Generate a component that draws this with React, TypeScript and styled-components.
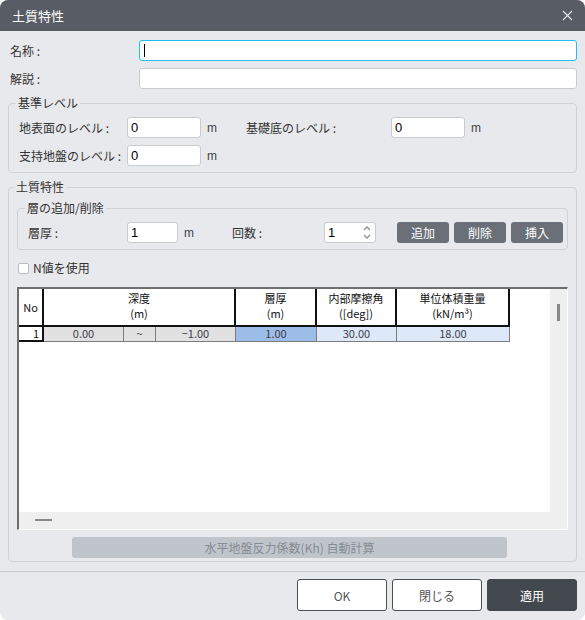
import React from 'react';
import styled, { createGlobalStyle } from 'styled-components';

const GlobalStyle = createGlobalStyle`
  html, body {
    margin: 0;
    padding: 0;
    background: #ffffff;
  }
  body {
    font-family: "Noto Sans CJK JP", "Noto Sans", sans-serif;
    font-size: 12px;
    color: #333;
  }
  * {
    box-sizing: border-box;
  }
`;

const columns = [
  { key: 'no', label: ['No'], span: 1 },
  { key: 'depth', label: ['深度', '(m)'], span: 3 },
  { key: 'thick', label: ['層厚', '(m)'], span: 1 },
  { key: 'phi', label: ['内部摩擦角', '([deg])'], span: 1 },
  { key: 'gamma', label: ['単位体積重量', '(kN/m³)'], span: 1 },
];

const App = () => {
  return (
    <>
      <GlobalStyle />
      <Dialog>
        <TitleBar>
          <span>土質特性</span>
          <CloseIcon width="11" height="11" viewBox="0 0 11 11">
            <path d="M1 1 L10 10 M10 1 L1 10" stroke="#e8e9ec" strokeWidth="1.1" />
          </CloseIcon>
        </TitleBar>

        <Body>
          <FieldRow>
            <FieldLabel>名称 :</FieldLabel>
            <TextBox $focused>
              <Caret />
            </TextBox>
          </FieldRow>
          <FieldRow>
            <FieldLabel>解説 :</FieldLabel>
            <TextBox />
          </FieldRow>

          <Group>
            <Legend>基準レベル</Legend>
            <Rows>
              <Row>
                <RowLabel $w={108}>地表面のレベル :</RowLabel>
                <NumBox $w={74}>0</NumBox>
                <Unit $w={45}>m</Unit>
                <RowLabel $w={145}>基礎底のレベル :</RowLabel>
                <NumBox $w={74}>0</NumBox>
                <Unit $w={30}>m</Unit>
              </Row>
              <Row>
                <RowLabel $w={108}>支持地盤のレベル :</RowLabel>
                <NumBox $w={74}>0</NumBox>
                <Unit $w={30}>m</Unit>
              </Row>
            </Rows>
          </Group>

          <SoilGroup>
            <Legend>土質特性</Legend>
            <SubGroup>
              <Legend>層の追加/削除</Legend>
              <Row>
                <RowLabel $w={99}>層厚 :</RowLabel>
                <NumBox $w={51}>1</NumBox>
                <Unit $w={54}>m</Unit>
                <RowLabel $w={92}>回数 :</RowLabel>
                <SpinBox>
                  <span>1</span>
                  <SpinArrows>
                    <svg width="8" height="5" viewBox="0 0 8 5">
                      <path d="M1 4 L4 1 L7 4" stroke="#8a8f96" strokeWidth="1.3" fill="none" />
                    </svg>
                    <svg width="8" height="5" viewBox="0 0 8 5">
                      <path d="M1 1 L4 4 L7 1" stroke="#8a8f96" strokeWidth="1.3" fill="none" />
                    </svg>
                  </SpinArrows>
                </SpinBox>
                <ActionButtons>
                  <ActionButton>追加</ActionButton>
                  <ActionButton>削除</ActionButton>
                  <ActionButton>挿入</ActionButton>
                </ActionButtons>
              </Row>
            </SubGroup>

            <CheckRow>
              <CheckBox />
              <span>N値を使用</span>
            </CheckRow>

            <TableFrame>
              <TableMain>
                <GridArea>
                  <Grid>
                    {columns.map((c) => (
                      <HeadCell key={c.key} $span={c.span} $single={c.label.length === 1}>
                        {c.label.map((l) => (
                          <HeadLine key={l}>{l}</HeadLine>
                        ))}
                      </HeadCell>
                    ))}
                    <NoCell>1</NoCell>
                    <DataCell $bg="#e1e1e1">0.00</DataCell>
                    <DataCell $bg="#e1e1e1">~</DataCell>
                    <DataCell $bg="#e1e1e1">−1.00</DataCell>
                    <DataCell $bg="#9dbde9">1.00</DataCell>
                    <DataCell $bg="#dde8f8">30.00</DataCell>
                    <DataCell $bg="#dde8f8">18.00</DataCell>
                  </Grid>
                </GridArea>
                <VScroll>
                  <VThumb />
                </VScroll>
              </TableMain>
              <HScroll>
                <HThumb />
              </HScroll>
            </TableFrame>

            <WideButton>水平地盤反力係数(Kh) 自動計算</WideButton>
          </SoilGroup>
        </Body>

        <Separator />
        <Footer>
          <FooterButton>OK</FooterButton>
          <FooterButton>閉じる</FooterButton>
          <FooterButton $primary>適用</FooterButton>
        </Footer>
      </Dialog>
    </>
  );
};

const Dialog = styled.div`
  width: 585px;
  height: 620px;
  background: #e8e9ec;
  border-radius: 8px;
  overflow: hidden;
  display: flex;
  flex-direction: column;
`;

const TitleBar = styled.div`
  height: 31px;
  flex-shrink: 0;
  display: flex;
  align-items: center;
  justify-content: space-between;
  padding: 0 12px 0 12px;
  background: #575c65;
  color: #ffffff;
  font-size: 13px;
  line-height: 16px;
`;

const CloseIcon = styled.svg`
  display: block;
`;

const Body = styled.div`
  padding: 9px 8px 0 8px;
  display: flex;
  flex-direction: column;
`;

const FieldRow = styled.div`
  display: grid;
  grid-template-columns: 131px 1fr;
  align-items: center;
  margin-bottom: 7px;
`;

const FieldLabel = styled.span`
  padding-left: 2px;
  line-height: 16px;
  color: #333;
`;

const TextBox = styled.div<{ $focused?: boolean }>`
  height: 21px;
  display: flex;
  align-items: center;
  padding-left: 4px;
  background: #ffffff;
  border: 1px solid ${(p) => (p.$focused ? '#1fbff0' : '#c8cbd0')};
  border-radius: 3px;
`;

const Caret = styled.span`
  width: 1px;
  height: 13px;
  background: #000;
`;

const Group = styled.fieldset`
  margin: -1px 0 0 0;
  padding: 6px 10px 6px 10px;
  border: 1px solid #cfd2d6;
  border-radius: 4px;
  min-width: 0;
`;

const SoilGroup = styled(Group)`
  margin-top: 6px;
  padding: 5px 8px 3px 8px;
  display: flex;
  flex-direction: column;
`;

const SubGroup = styled(Group)`
  margin: 0;
  padding: 6px 7px 6px 10px;
`;

const Legend = styled.legend`
  margin-left: -3px;
  padding: 0 2px;
  line-height: 16px;
  font-size: 12px;
  color: #333;
`;

const Rows = styled.div`
  display: flex;
  flex-direction: column;
  gap: 7px;
`;

const Row = styled.div`
  display: flex;
  align-items: center;
  height: 21px;
`;

const RowLabel = styled.span<{ $w: number }>`
  width: ${(p) => p.$w}px;
  flex-shrink: 0;
  line-height: 16px;
  white-space: nowrap;
`;

const NumBox = styled.div<{ $w: number }>`
  width: ${(p) => p.$w}px;
  height: 21px;
  flex-shrink: 0;
  padding-left: 3px;
  display: flex;
  align-items: center;
  background: #ffffff;
  border: 1px solid #c8cbd0;
  border-radius: 3px;
  color: #000;
  font-family: "Liberation Sans", "Noto Sans CJK JP", sans-serif;
  font-size: 13px;
`;

const Unit = styled.span<{ $w: number }>`
  width: ${(p) => p.$w}px;
  flex-shrink: 0;
  padding-left: 6px;
  font-family: "Liberation Sans", sans-serif;
  font-size: 12px;
  color: #444;
`;

const SpinBox = styled(NumBox).attrs({ $w: 52 })`
  justify-content: space-between;
  padding-right: 4px;
`;

const SpinArrows = styled.div`
  display: flex;
  flex-direction: column;
  gap: 3px;

  svg {
    display: block;
  }
`;

const ActionButtons = styled.div`
  display: flex;
  gap: 5px;
  margin-left: 21px;
`;

const ActionButton = styled.div`
  width: 52px;
  height: 21px;
  display: flex;
  align-items: center;
  justify-content: center;
  background: #6b7078;
  color: #ffffff;
  border-radius: 3px;
  font-size: 12px;
`;

const CheckRow = styled.div`
  display: flex;
  align-items: center;
  gap: 4px;
  height: 16px;
  margin: 10px 0 0 1px;
  line-height: 16px;
`;

const CheckBox = styled.span`
  width: 11px;
  height: 11px;
  background: #ffffff;
  border: 1px solid #b9bcc1;
  border-radius: 2px;
`;

const TableFrame = styled.div`
  margin-top: 11px;
  width: 551px;
  height: 243px;
  display: flex;
  flex-direction: column;
  background: #efefef;
  border-top: 2px solid #6e6e6e;
  border-left: 2px solid #6e6e6e;
  border-right: 1px solid #ffffff;
  border-bottom: 1px solid #ffffff;
`;

const TableMain = styled.div`
  flex: 1;
  display: flex;
  min-height: 0;
`;

const GridArea = styled.div`
  flex: 1;
  background: #ffffff;
`;

const Grid = styled.div`
  display: grid;
  grid-template-columns: 25px 80px 32px 80px 81px 80px 113px;
  grid-template-rows: 38px 15px;
  width: 491px;
  font-family: "Noto Sans CJK JP", sans-serif;
  font-size: 11px;
`;

const HeadCell = styled.div<{ $span: number; $single: boolean }>`
  grid-column: span ${(p) => p.$span};
  display: flex;
  flex-direction: column;
  align-items: center;
  justify-content: ${(p) => (p.$single ? 'center' : 'flex-start')};
  padding-top: ${(p) => (p.$single ? 0 : 2)}px;
  background: #ffffff;
  color: #111;
  border-right: 2px solid #111;
  border-bottom: 2px solid #111;
`;

const HeadLine = styled.div`
  height: 15px;
  line-height: 15px;
  white-space: nowrap;
`;

const NoCell = styled.div`
  text-align: right;
  padding-right: 3px;
  line-height: 12px;
  color: #111;
  background: #ffffff;
  border-right: 2px solid #111;
  border-bottom: 2px solid #111;
`;

const DataCell = styled.div<{ $bg: string }>`
  text-align: center;
  line-height: 13px;
  color: #3c4048;
  background: ${(p) => p.$bg};
  border-right: 1px solid #7c7c7c;
  border-bottom: 1px solid #7c7c7c;
`;

const VScroll = styled.div`
  width: 17px;
  padding: 15px 0 0 7px;
`;

const VThumb = styled.div`
  width: 3px;
  height: 17px;
  background: #888;
`;

const HScroll = styled.div`
  height: 17px;
  flex-shrink: 0;
  padding: 7px 0 0 16px;
`;

const HThumb = styled.div`
  width: 17px;
  height: 2px;
  background: #888;
`;

const WideButton = styled.div`
  margin: 7px 0 0 55px;
  width: 435px;
  height: 21px;
  display: flex;
  align-items: center;
  justify-content: center;
  background: #bfc5cb;
  color: #858c93;
  border-radius: 3px;
  font-size: 12px;
`;

const Separator = styled.div`
  margin-top: 9px;
  height: 1px;
  background: #c4c8cd;
`;

const Footer = styled.div`
  display: flex;
  justify-content: flex-end;
  gap: 5px;
  padding: 7px 8px 0 8px;
`;

const FooterButton = styled.div<{ $primary?: boolean }>`
  width: 90px;
  height: 32px;
  display: flex;
  align-items: center;
  justify-content: center;
  border-radius: 3px;
  font-size: 12px;
  background: ${(p) => (p.$primary ? '#43484f' : '#ffffff')};
  color: ${(p) => (p.$primary ? '#ffffff' : '#555')};
  border: 1px solid ${(p) => (p.$primary ? '#43484f' : '#4a4e55')};
`;

export default App;
